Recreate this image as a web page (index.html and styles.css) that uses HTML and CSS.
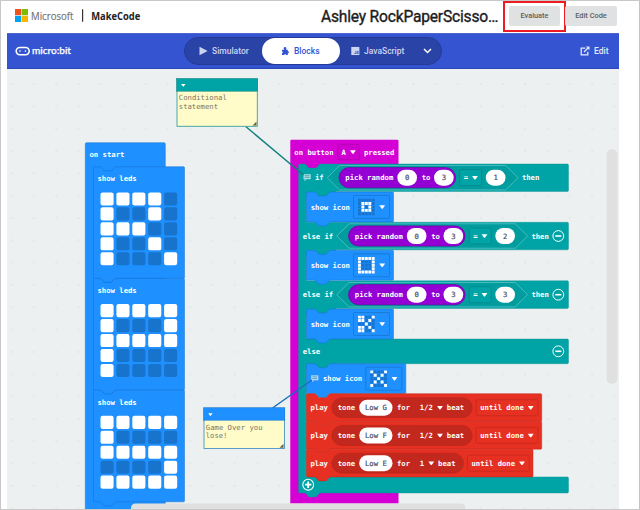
FILE: index.html
```html
<!DOCTYPE html>
<html lang="en">
<head>
<meta charset="utf-8">
<title>MakeCode</title>
<link rel="stylesheet" href="styles.css">
</head>
<body>
<div class="frame">
  <header class="top">
    <svg class="ms" viewBox="0 0 12.6 12.6"><path fill="#f1511b" d="M0 0h6v6H0z"/><path fill="#80bb03" d="M6.6 0h6v6h-6z"/><path fill="#00a4ef" d="M0 6.6h6v6H0z"/><path fill="#fbb500" d="M6.6 6.6h6v6h-6z"/></svg>
    <svg class="names" viewBox="0 0 112 20"><text class="company" x="0" y="13.8" textLength="42.5" lengthAdjust="spacingAndGlyphs">Microsoft</text><path d="M51.6 3.2v12.6" stroke="#333" stroke-width="1.2"/><text class="product" x="60.3" y="13.8" textLength="49" lengthAdjust="spacingAndGlyphs">MakeCode</text></svg>
    <h1 class="title">Ashley RockPaperScisso…</h1>
    <div class="highlight"><button class="btn evaluate">Evaluate</button></div>
    <button class="btn edit-code">Edit Code</button>
  </header>

  <nav class="bar">
    <svg class="microbit" viewBox="0 0 60 16"><rect x="1.2" y="4.5" width="13" height="7.2" rx="3.6" fill="none" stroke="#fff" stroke-width="1.6"/><circle cx="5" cy="8.1" r=".8" fill="#fff"/><circle cx="10.400" cy="8.1" r=".8" fill="#fff"/><text x="17" y="11" textLength="39" lengthAdjust="spacingAndGlyphs">micro:bit</text></svg>
    <div class="toggle">
      <div class="tab sim"><svg class="ico" viewBox="0 0 9 10"><path d="M.5.7 8.6 5 .5 9.3z" fill="currentColor"/></svg><span>Simulator</span></div>
      <div class="tab blocks"><svg class="ico" viewBox="0 0 9 10"><path d="M1 3.7h2.2C2.3 2.2 2.6 1 4 1s1.800 1.200 1 2.700h1.800v1.600c1.500 0 1.500 2 0 2V9H4.900c.2-1.300-1.600-1.300-1.400 0H1V7.300c1.100 0 1.100-1.700 0-1.700z" fill="currentColor"/></svg><span>Blocks</span></div>
      <div class="tab js"><svg class="ico" viewBox="0 0 10 10"><rect x=".3" y=".5" width="9" height="9" fill="currentColor"/><text x="3.3" y="8.700" class="jsmark">JS</text></svg><span>JavaScript</span></div>
      <div class="tab more"><svg viewBox="0 0 9 6"><path d="m1 1 3.500 3.500L8 1" fill="none" stroke="#fff" stroke-width="1.500"/></svg></div>
    </div>
    <div class="edit"><svg class="ico" viewBox="0 0 10 10"><path d="M5.300 2.100H1.200v6.700h6.600V5.800M4 6l4.300-4.300" fill="none" stroke="currentColor" stroke-width="1.300"/><path d="M5.800.5h3.700v3.700z" fill="currentColor"/></svg><span>Edit</span></div>
  </nav>

  <main>
  <svg class="workspace" viewBox="7 69 612 440">
    <defs>
      <pattern id="dots" x="0.300" y="-5.350" width="22.330" height="22.330" patternUnits="userSpaceOnUse"><rect x="10.400" y="-.7" width="1.600" height="1.400" fill="#dde1e2"/><rect x="10.400" y="21.600" width="1.600" height=".73" fill="#dde1e2"/></pattern>
      <g id="caret"><path d="M-2.900-1.700h5.800L.5 1.700h-1z" fill="#fff"/></g>
      <g id="comment"><rect x="0" y="0" width="7.200" height="5" fill="#fff" opacity=".65"/><path d="M1 5v2l2-2z" fill="#fff" opacity=".65"/><path d="M1.200 1.500h4.800M1.200 3.200h4.800" stroke="#2a7fa0" stroke-width=".6"/></g>
      <g id="minus"><circle r="5.400" fill="none" stroke="#fff" stroke-width="1"/><path d="M-3 0h6" stroke="#fff" stroke-width="1.600"/></g>
    </defs>
    <rect x="7" y="69" width="612" height="440" fill="#ecf0f1"/>
    <rect x="7" y="69" width="612" height="440" fill="url(#dots)"/>

    <g id="start"></g>

    <path class="magenta" d="M291.600 139.700h105.600q1.300 0 1.300 1.300v23H306v329h92.500v10.500H290.300V141q0-1.300 1.300-1.300z"/>
    <path d="M300 162h30v8h-30zM300 490h30v8h-30z" fill="#d400d4"/>
    <text class="b" x="294.300" y="154.800" textLength="39.300">on button</text>
    <rect class="fm" x="337.800" y="144.300" width="21.500" height="15.600" rx="1.300"/>
    <text class="b" x="341.500" y="154.800">A</text><use href="#caret" x="352.900" y="152"/>
    <text class="b" x="364" y="154.800" textLength="30.300">pressed</text>

    <path class="teal" d="M299.800 164h4.700c2.500 0 2.800 4 5 4h6c2.200 0 2.500-4 5-4h246.700q1.300 0 1.300 1.300v24.900q0 1.300-1.300 1.300H306.500v30.800h260.700q1.300 0 1.300 1.300v24.900q0 1.300-1.300 1.300H306.500v31h260.700q1.300 0 1.300 1.300v25q0 1.300-1.300 1.300H306.500V339h260.700q1.300 0 1.300 1.300v22.100q0 1.300-1.300 1.300H306.500v113.200h260.700q1.300 0 1.300 1.300V491.700q0 1.300-1.300 1.300H320.500c-2.500 0-2.800 4-5 4h-6c-2.200 0-2.500-4-5-4h-4.700q-1.300 0-1.300-1.300V165.300q0-1.300 1.300-1.300z"/>
    <g id="conditions"></g>
    <g id="icons"></g>
    <text class="b" x="302.700" y="354" textLength="17.400">else</text>
    <use href="#minus" x="558.300" y="351.300"/>
    <g id="tones"></g>
    <circle cx="308.200" cy="484.700" r="5.400" fill="none" stroke="#fff" stroke-width="1.100"/><path d="M305 484.700h6.400M308.200 481.500v6.400" stroke="#fff" stroke-width="1.800"/>
    <use href="#comment" x="303.500" y="174.200"/><use href="#comment" x="311.200" y="375.300"/>

    <path d="M245.700 126.500 303.500 175" stroke="#11807f" stroke-width="1.500"/>
    <path d="m272.500 408 39.500-28" stroke="#1b6fc0" stroke-width="1.500"/>
    <rect x="177" y="79" width="80.300" height="47.300" fill="#fffcc9" stroke="#3a9e9e" stroke-width=".9"/>
    <rect x="176.700" y="78.700" width="81" height="12.500" fill="#00a4a6" stroke="#0a8586" stroke-width=".5"/>
    <use href="#caret" transform="translate(183.300 85.200) scale(.75)"/>
    <text class="n" x="178.800" y="100.400" textLength="48">Conditional</text><text class="n" x="178.800" y="109.200" textLength="39.200">statement</text>
    <path d="M252.500 125.500l4-4v4z" fill="#66634a"/>
    <rect x="204" y="408.100" width="80.500" height="40.400" fill="#fffcc9" stroke="#4a93c4" stroke-width=".9"/>
    <rect x="203.700" y="407.800" width="81.100" height="12.400" fill="#1e90ff" stroke="#1873cc" stroke-width=".5"/>
    <use href="#caret" transform="translate(210.400 414.500) scale(.75)"/>
    <text class="n" x="205.800" y="429.700" textLength="56.700">Game Over you</text><text class="n" x="205.800" y="438.400" textLength="21.600">lose!</text>
    <path d="M279.500 447.700l4-4v4z" fill="#66634a"/>

    <rect x="606.600" y="149" width="10.800" height="234.800" rx="5.400" fill="#e0e0e0"/>
    <path d="M131 509v-.5q0-5 5-5h324.500q5 0 5 5v.5z" fill="#e0e0e0"/>
  </svg>
  </main>
</div>
<script src="blocks.js"></script>
</body>
</html>
```
FILE: styles.css
```css
* { box-sizing: border-box; }
body { margin: 0; background: #fff; font-family: Roboto, "Liberation Sans", sans-serif; }
.frame { width: 640px; height: 510px; border: 1px solid #c8c8c8; border-right-color: #c4c4c4; overflow: hidden; }
.top { display: flex; align-items: flex-start; height: 32px; padding-left: 14px; }
.top > * { flex: none; }
.ms { width: 13px; height: 13px; margin-top: 8px; }
.names { width: 112px; height: 20px; margin: 5px 0 0 3px; }
.names text { font-family: "Open Sans", sans-serif; font-size: 10px; }
.names .company { fill: #737373; stroke: #737373; stroke-width: .15; }
.names .product { fill: #222; font-weight: 700; }
.title { margin: 4px 0 0 178px; width: 182px; font-size: 15.6px; line-height: 24px; font-weight: 400; letter-spacing: -.2px; color: #1c1c1c; -webkit-text-stroke: .35px #1c1c1c; white-space: nowrap; }
.highlight { width: 63px; height: 31px; margin-top: 0; padding: 3px 4px; border: 2px solid #ed1c24; }
.btn { display: block; height: 20px; padding: 0; border: 0; border-radius: 2px; background: #e0e1e2; color: #5c5d5e; font: 500 7.4px/20px Roboto, sans-serif; text-align: center; }
.evaluate { width: 51px; }
.edit-code { width: 52px; margin: 5px 0 0 -1px; }
.bar { display: flex; align-items: center; height: 36px; width: 612px; margin-left: 6px; background: #3454d1; border-top: 1px solid #4c68cf; border-bottom: 1px solid #2c48b8; }
.microbit { width: 60px; height: 16px; margin-left: 8px; }
.microbit text { font: 500 9.500px "Lato", sans-serif; fill: #fff; stroke: #fff; stroke-width: .25; }
.toggle { display: flex; align-items: center; width: 258px; height: 28px; margin-left: 109px; padding: 0 1px; border-radius: 14px; background: #2a43a7; border: 1px solid #243b96; }
.tab { display: flex; align-items: center; gap: 4px; height: 26px; font-size: 8.500px; font-weight: 500; color: #ccd4f2; }
.tab svg, .edit svg { display: block; }
.ico { width: 9px; height: 10px; }
.sim { width: 76px; padding-left: 13px; }
.blocks { width: 78px; padding-left: 19px; background: #fff; border-radius: 13px; color: #3454d1; }
.js { width: 76px; padding-left: 11px; }
.jsmark { font: 700 4.500px Roboto, sans-serif; fill: #2a43a7; }
.more { padding-left: 7px; }
.more svg { width: 9px; height: 6px; }
.edit { display: flex; align-items: center; gap: 4px; margin-left: 138px; font-size: 8.500px; font-weight: 500; color: #e4e9fb; }
.edit .ico { width: 10px; }
main { margin-left: 6px; }
.workspace { display: block; width: 612px; height: 440px; }
.b, .n, .v { font-family: "DejaVu Sans Mono", monospace; font-size: 7.250px; }
.b { fill: #fff; font-weight: 700; }
.n { fill: #77776a; }
.v { fill: #4a5068; text-anchor: middle; stroke: #4a5068; stroke-width: .2; }
.magenta { fill: #d400d4; }
.fm { fill: #cf00cf; stroke: #aa00aa; stroke-width: .7; }
.teal { fill: #00a4a6; stroke: #0b8e90; stroke-width: .4; }
.gap { fill: #00a4a6; }
.ft { fill: #00a4a6; stroke: #008385; stroke-width: .7; }
.hex { fill: #009c9e; stroke: #66c8c9; stroke-width: .7; }
.purple { fill: #9400d3; stroke: #7600a8; stroke-width: .7; }
.blue { fill: #1e90ff; stroke: #1873cc; stroke-width: .5; }
.fb { fill: #1e90ff; stroke: #1873cc; stroke-width: .7; }
.off { fill: #1873cc; }
.on { fill: #fff; }
.red { fill: #e63022; stroke: #c2281d; stroke-width: .5; }
.fr { fill: none; stroke: #c2281d; stroke-width: .7; }
.shadow { fill: #c2281d; stroke: #b3261b; stroke-width: .5; }
```
FILE: blocks.js
```js
const CH = 4.36;
const put = (id, s) => { document.getElementById(id).innerHTML = s; };
const label = (x, y, t) => `<text class="b" x="${x}" y="${y + 2.600}" textLength="${t.length * CH}">${t}</text>`;
const caret = (x, y) => `<use href="#caret" x="${x}" y="${y}"/>`;
const value = (x, y, w, t) => `<rect class="on" x="${x}" y="${y - 8}" width="${w}" height="16" rx="8"/><text class="v" x="${x + w / 2}" y="${y + 2.600}">${t}</text>`;

// Statement block outline with a notch at the top and a bump at the bottom.
function block(cls, x, y, w, h, off) {
  return `<path class="${cls}" d="M${x + 1} ${y}H${x + off}c2.500 0 2.800 4 5 4h6c2.200 0 2.500-4 5-4H${x + w - 1}q1 0 1 1v${h - 2}q0 1-1 1H${x + off + 16}c-2.500 0-2.800 4-5 4h-6c-2.200 0-2.500-4-5-4H${x + 1}q-1 0-1-1v${2 - h}q0-1 1-1z"/>`;
}
function leds(rows, x, y, px, py, w, h, r) {
  return rows.map((row, j) => [...row].map((c, i) =>
    `<rect class="${c === '1' ? 'on' : 'off'}" x="${x + i * px}" y="${y + j * py}" width="${w}" height="${h}" rx="${r}"/>`).join('')).join('');
}

let s = '<rect class="blue" x="85.300" y="142.700" width="80" height="380" rx="1.300"/>' + label(89.500, 154.700, 'on start');
[['11110', '10010', '11100', '10010', '10001'],
 ['11111', '10001', '11111', '10000', '10000'],
 ['11111', '10000', '11111', '00001', '11111']].forEach((rows, k) => {
  const y = 166.700 + k * 111.700;
  s += block('blue', 93.500, y, 91, 111.700, 6.500) + label(97.500, y + 12, 'show leds')
    + leds(rows, 100.500, y + 25.700, 15.900, 14.950, 13.100, 13.100, 2.200);
});
put('start', s);

s = '';
[[177.700, 0, 1], [236, 9.500, 2], [294.700, 9.500, 3]].forEach(([y, d, n]) => {
  s += label(d ? 302.700 : 315, y, d ? 'else if' : 'if');
  s += `<path class="hex" d="M${327.300 + d} ${y}l12.300-12.200H${505.700 + d}L${518 + d} ${y}l-12.300 12.200H${339.600 + d}z"/>`;
  s += `<rect class="purple" x="${339 + d}" y="${y - 10.100}" width="116.600" height="20.200" rx="10.100"/>`;
  s += label(345.300 + d, y, 'pick random') + value(397.300 + d, y, 19.700, 0) + label(421.700 + d, y, 'to') + value(434 + d, y, 19.700, 3);
  s += `<rect class="ft" x="${459.600 + d}" y="${y - 8}" width="22" height="16" rx="1.300"/>` + label(463.700 + d, y, '=') + caret(475 + d, y);
  s += value(485.800 + d, y, 19.700, n) + label(521.900 + d, y, 'then');
  if (d) s += `<use href="#minus" x="558.300" y="${y}"/>`;
});
put('conditions', s);

s = '';
[[192, 0, ['00000', '01110', '01010', '01110', '00000']],
 [250.300, 0, ['11111', '10001', '10001', '10001', '11111']],
 [309, 0, ['11001', '11010', '00100', '11010', '11001']],
 [363.700, 12.300, ['10001', '01010', '00100', '01010', '10001']]].forEach(([y, d, rows]) => {
  s += `<rect class="gap" x="306" y="${y - 1}" width="30" height="7"/>`;
  s += block('blue', 306.500, y, 87 + d, 29.900, 8) + label(310.700 + d, y + 15, 'show icon');
  s += `<rect class="fb" x="${353.500 + d}" y="${y + 3.500}" width="36" height="23" rx="1.300"/>`;
  s += leds(rows, 358 + d, y + 6.700, 3.450, 3.400, 2.900, 2.900, .3) + caret(382.200 + d, y + 15);
});
put('icons', s);

s = '';
[['G', '1/2'], ['F', '1/2'], ['E', '1']].forEach(([note, len], k) => {
  const y = 393.700 + k * 27.750, c = y + 14, d = k === 2 ? -8.720 : 0;
  s += block('red', 306.500, y, 235.200 + d, 27.700, 8) + label(310.500, c, 'play');
  s += `<rect class="shadow" x="331.800" y="${c - 10}" width="${140.500 + d}" height="20" rx="10"/>`;
  s += label(337.700, c, 'tone') + value(359.200, c, 33.300, 'Low ' + note) + label(397, c, 'for') + label(419.700, c, len);
  s += `<rect class="fr" opacity=".7" x="415.300" y="${c - 8}" width="${31 + d}" height="16" rx="1.300"/>`;
  s += caret(440 + d, c) + label(446.800 + d, c, 'beat');
  s += `<rect class="fr" x="476.200" y="${c - 8}" width="61.800" height="16" rx="1.300" transform="translate(${d} 0)"/>`;
  s += label(480.200 + d, c, 'until done') + caret(530.700 + d, c);
});
put('tones', s);
```
